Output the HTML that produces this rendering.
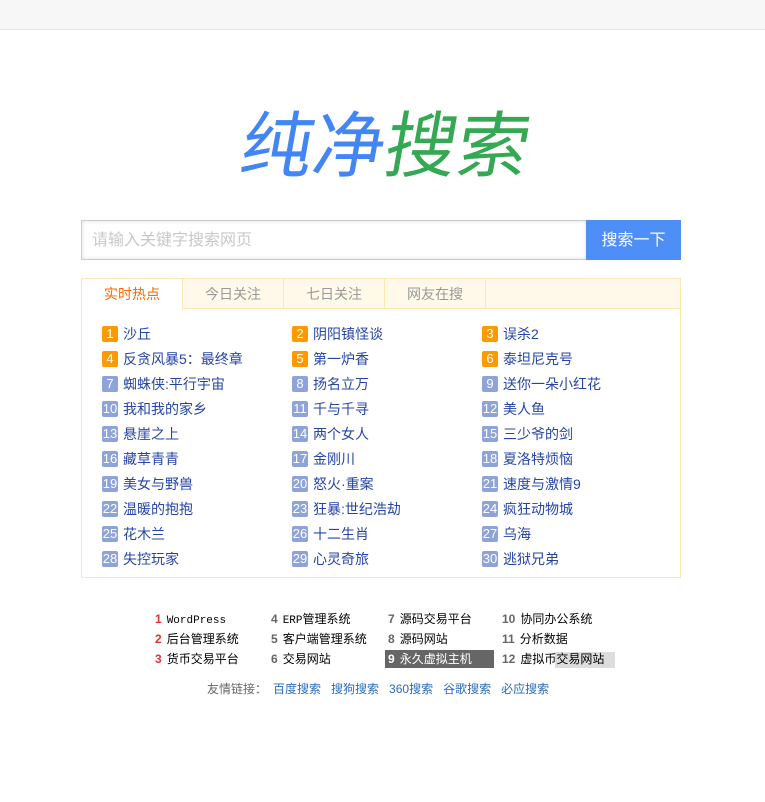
<!DOCTYPE html>
<html><head><meta charset="utf-8"><style>
*{margin:0;padding:0;box-sizing:border-box}
body{width:765px;height:802px;background:#fff;font-family:"Liberation Sans","Noto Sans CJK SC",sans-serif;position:relative;overflow:hidden}
.top{position:absolute;left:0;top:0;width:765px;height:30px;background:#f7f7f7;border-bottom:1px solid #e6e6e6}
.logo{position:absolute;left:234px;top:90px;font-size:72px;line-height:100px;white-space:nowrap;font-family:"Noto Sans CJK SC",sans-serif;transform:skewX(-10deg);transform-origin:0 100%}
.logo .b{color:#4285f4}.logo .g{color:#34a853}
.inp{position:absolute;left:81px;top:220px;width:506px;height:40px;border:1px solid #ccc;box-shadow:inset 0 0 4px #ddd;font-size:16px;color:#c8c8c8;padding-left:10px;line-height:40px}
.btn{position:absolute;left:586px;top:220px;width:95px;height:40px;background:#4e8ef7;color:#fff;font-size:16px;text-align:center;line-height:42px}
.box{position:absolute;left:81px;top:278px;width:600px;height:300px;border:1px solid #fde8b4}
.tabs{height:30px;background:#fef9e8;border-bottom:1px solid #fde8b4;position:relative}
.tab{position:absolute;top:0;width:101px;height:30px;border-right:1px solid #fde8b4;text-align:center;line-height:30px;font-size:14px;color:#999}
.tab.a{background:#fff;color:#f60;height:31px}
.item{position:absolute;font-size:14px;color:#2545a6;white-space:nowrap;line-height:18px;display:flex;align-items:center}
.item i{display:inline-block;font-style:normal;width:16px;height:16px;background:#8ea3d8;color:#fff;font-size:13px;line-height:16px;text-align:center;border-radius:2px;margin-right:5px}
.item i.o{background:#f90}
.bt{position:absolute;font-size:12px;color:#000;white-space:nowrap;line-height:17px}
.bt b{color:#666;margin-right:5px}
.bt b.r{color:#d33}
.fl{position:absolute;left:207px;top:680px;font-size:12px;color:#666;white-space:nowrap}
.fl a{color:#2a6bb8;text-decoration:none;margin-left:10px}
</style></head><body>
<div class="top"></div>
<div class="logo"><span class="b">纯净</span><span class="g">搜索</span></div>
<div class="inp">请输入关键字搜索网页</div>
<div class="btn">搜索一下</div>
<div class="box">
<div class="tabs">
<div class="tab a" style="left:0">实时热点</div>
<div class="tab" style="left:101px">今日关注</div>
<div class="tab" style="left:202px">七日关注</div>
<div class="tab" style="left:303px">网友在搜</div>
</div>
</div>
<div id="list"></div>
<div class="bt" style="left:155px;top:611px"><b class="r">1</b><span style="font-family:'Liberation Mono',monospace;font-size:11px">WordPress</span></div>
<div class="bt" style="left:155px;top:631px"><b class="r">2</b>后台管理系统</div>
<div class="bt" style="left:155px;top:651px"><b class="r">3</b>货币交易平台</div>
<div class="bt" style="left:271px;top:611px"><b>4</b><span style="font-family:'Liberation Mono',monospace;font-size:11px">ERP</span>管理系统</div>
<div class="bt" style="left:271px;top:631px"><b>5</b>客户端管理系统</div>
<div class="bt" style="left:271px;top:651px"><b>6</b>交易网站</div>
<div class="bt" style="left:388px;top:611px"><b>7</b>源码交易平台</div>
<div class="bt" style="left:388px;top:631px"><b>8</b>源码网站</div>
<div style="position:absolute;left:385px;top:650px;width:109px;height:18px;background:#666"></div>
<div class="bt" style="left:388px;top:651px;color:#fff"><b style="color:#fff">9</b>永久虚拟主机</div>
<div class="bt" style="left:502px;top:611px"><b>10</b>协同办公系统</div>
<div class="bt" style="left:502px;top:631px"><b>11</b>分析数据</div>
<div style="position:absolute;left:555px;top:652px;width:60px;height:16px;background:#ddd"></div>
<div class="bt" style="left:502px;top:651px"><b>12</b>虚拟币交易网站</div>
<div class="fl">友情链接：<a style="margin-left:6px">百度搜索</a><a>搜狗搜索</a><a>360搜索</a><a>谷歌搜索</a><a>必应搜索</a></div>
<script>
var d=["沙丘","阴阳镇怪谈","误杀2","反贪风暴5：最终章","第一炉香","泰坦尼克号","蜘蛛侠:平行宇宙","扬名立万","送你一朵小红花","我和我的家乡","千与千寻","美人鱼","悬崖之上","两个女人","三少爷的剑","藏草青青","金刚川","夏洛特烦恼","美女与野兽","怒火·重案","速度与激情9","温暖的抱抱","狂暴:世纪浩劫","疯狂动物城","花木兰","十二生肖","乌海","失控玩家","心灵奇旅","逃狱兄弟"];
var h="";for(var k=0;k<30;k++){var c=k%3,r=Math.floor(k/3);h+='<div class="item" style="left:'+(102+c*190)+'px;top:'+(325+r*25)+'px"><i'+(k<6?' class="o"':'')+'>'+(k+1)+'</i>'+d[k]+'</div>';}
document.getElementById("list").innerHTML=h;
</script>
</body></html>
